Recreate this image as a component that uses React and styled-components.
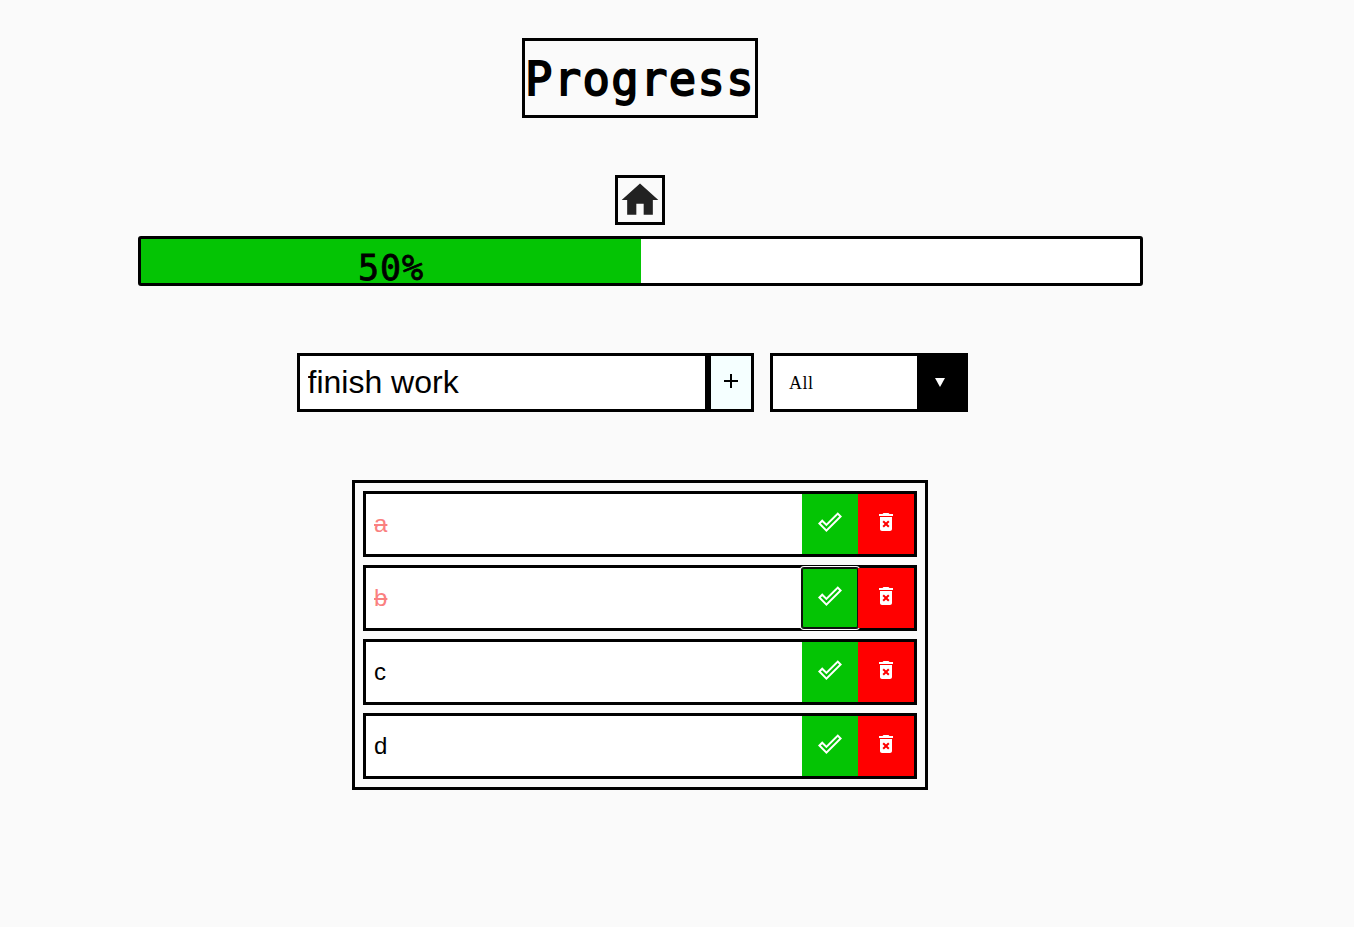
import React from "react";
import styled, { createGlobalStyle, css } from "styled-components";
import { MdAdd, MdDeleteForever, MdDoneOutline, MdHome } from "react-icons/md";

const GlobalStyle = createGlobalStyle`
  *, *::before, *::after { box-sizing: border-box; }
  body { margin: 0; background: #fafafa; color: #000; font-family: "Liberation Sans", sans-serif; }
`;

const Page = styled.main`
  width: 1280px;
  min-height: 927px;
  padding-top: 38px;
  display: flex;
  flex-direction: column;
  align-items: center;
`;

const Title = styled.h1`
  margin: 0;
  width: 236px;
  height: 80px;
  padding-top: 3px;
  border: 3px solid #000;
  display: flex;
  align-items: center;
  justify-content: center;
  font: 400 45.5px/71px "DejaVu Sans Mono", monospace;
  letter-spacing: 1.35px;
  -webkit-text-stroke: 1.8px #000;
`;

const HomeLink = styled.a`
  margin-top: 57px;
  width: 50px;
  height: 50px;
  padding-bottom: 1px;
  border: 3px solid #000;
  display: flex;
  align-items: center;
  justify-content: center;
  color: #222;
`;

const Track = styled.div`
  margin: 11px 0 0 1px;
  width: 1005px;
  height: 50px;
  border: 3px solid #000;
  border-radius: 3px;
  background: #fff;
`;

const Fill = styled.div`
  height: 44px;
  background: #04c404;
  padding-top: 14px;
  text-align: center;
  font: 400 35px/30px "DejaVu Sans Mono", monospace;
  letter-spacing: 0.9px;
  -webkit-text-stroke: 0.8px #000;
`;

const Controls = styled.form`
  margin: 67px 0 0 -15px;
  width: 671px;
  height: 59px;
  display: flex;
`;

const TaskInput = styled.input`
  width: 411px;
  height: 59px;
  padding: 0 7.5px;
  border: 3px solid #000;
  border-radius: 0;
  background: #fff;
  font: 400 32px "Liberation Sans", sans-serif;
  outline: none;
`;

const AddButton = styled.button`
  width: 46px;
  height: 59px;
  padding: 0 0 3px;
  border: 3px solid #000;
  background: #f5ffff;
  color: #000;
  display: flex;
  align-items: center;
  justify-content: center;
`;

const Select = styled.div`
  margin-left: 16px;
  width: 198px;
  height: 59px;
  border: 3px solid #000;
  background: #fff;
  display: flex;
  justify-content: space-between;
`;

const SelectValue = styled.span`
  padding-left: 16px;
  font: 400 18px/54px "Liberation Serif", serif;
  letter-spacing: 0.5px;
`;

const SelectArrow = styled.span`
  width: 48px;
  background: #000;
  display: flex;
  align-items: center;
  justify-content: center;
  padding-right: 2px;

  &::after {
    content: "";
    border: 5.5px solid transparent;
    border-top: 9px solid #fff;
    border-bottom: 0;
  }
`;

const List = styled.ul`
  margin: 68px 0 0;
  padding: 8px;
  width: 576px;
  border: 3px solid #000;
  list-style: none;
  display: flex;
  flex-direction: column;
  gap: 8px;
`;

const Row = styled.li`
  height: 66px;
  border: 3px solid #000;
  background: #fff;
  display: flex;
`;

const Label = styled.span`
  flex: 1;
  padding-left: 8px;
  font: 400 24px/60px "Liberation Sans", sans-serif;
  ${(p) => p.$done && css`
    color: #fa8080;
    text-decoration: line-through 2px;
  `}
`;

const Action = styled.button`
  width: 56px;
  height: 60px;
  padding: 0 0 4px;
  border: 0;
  color: #fff;
  display: flex;
  align-items: center;
  justify-content: center;
  position: relative;
  background: ${(p) => p.$color};
  ${(p) => p.$focused && css`
    border-radius: 2px;
    box-shadow: inset 0 0 0 1px #101010, 0 0 0 1px #101010, 0 0 0 2px #fff;
  `}
`;

const tasks = [
  { name: "a", done: true },
  { name: "b", done: true, focused: true },
  { name: "c" },
  { name: "d" },
];

export default function App() {
  return (
    <>
      <GlobalStyle />
      <Page>
        <Title>Progress</Title>
        <HomeLink aria-label="Home"><MdHome size={44} /></HomeLink>
        <Track><Fill style={{ width: "500px" }}>50%</Fill></Track>
        <Controls>
          <TaskInput defaultValue="finish work" spellCheck={false} />
          <AddButton type="button" aria-label="Add"><MdAdd size={24} /></AddButton>
          <Select>
            <SelectValue>All</SelectValue>
            <SelectArrow />
          </Select>
        </Controls>
        <List>
          {tasks.map((t) => (
            <Row key={t.name}>
              <Label $done={t.done}>{t.name}</Label>
              <Action $color="#04c404" $focused={t.focused} aria-label="Done"><MdDoneOutline size={24} /></Action>
              <Action $color="#ff0000" aria-label="Delete"><MdDeleteForever size={24} /></Action>
            </Row>
          ))}
        </List>
      </Page>
    </>
  );
}
